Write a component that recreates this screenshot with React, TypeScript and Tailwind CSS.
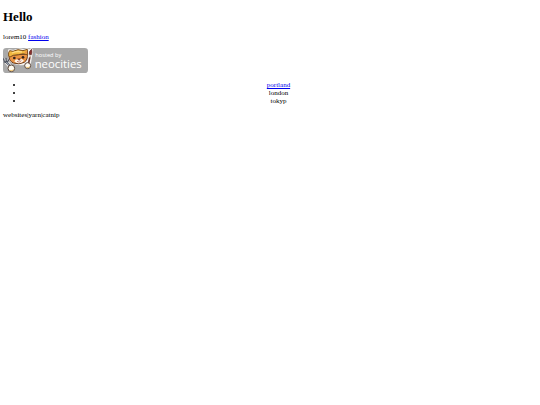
import type { ReactNode } from 'react'

const places: { name: string; href?: string }[] = [
  { name: 'portland', href: '#portland' },
  { name: 'london' },
  { name: 'tokyp' },
]

function TextLink({ href, children }: { href: string; children: ReactNode }) {
  return (
    <a href={href} className="text-[#0000ee] underline">
      {children}
    </a>
  )
}

function NeocitiesBadge() {
  return (
    <svg viewBox="0 0 255 75" className="block w-[85px] h-[25px]" role="img" aria-label="Hosted by Neocities">
      <rect width="255" height="75" rx="10" fill="#a9a9a9" />

      {/* white sticker outline */}
      <g fill="none" stroke="#f4f1ee" strokeWidth="8" strokeLinejoin="round" strokeLinecap="round">
        <path d="M20 24 L19 8 L32 10 Q50 2 62 8 L74 5 L76 24 Q80 40 62 47 Q34 50 22 36 Z" />
        <path d="M84 7 L76 52" strokeWidth="13" />
        <path d="M6 37 L26 60" strokeWidth="12" />
      </g>

      {/* fork */}
      <g fill="none" stroke="#4b505c" strokeLinecap="round">
        <path d="M10 42 L25 58" strokeWidth="6" />
        <path d="M2 33 L4 42 L12 44 L17 36 M9 31 L10 42" strokeWidth="4" />
      </g>
      <path d="M10 42 L24 57" stroke="#aeb8c6" strokeWidth="3" />

      {/* face */}
      <path d="M19 22 Q16 38 31 45 Q48 51 64 43 Q75 35 73 18 Z" fill="#ec9443" stroke="#6b3c20" strokeWidth="3" />
      <path d="M34 40 Q38 32 46 34 Q55 29 63 38 Q58 45 48 46 Q38 46 34 40" fill="#fff5e7" />
      <path d="M44 33 L52 32 L49 37 Z" fill="#a83f35" stroke="#61301f" strokeWidth="2" />
      <path d="M42 40 Q49 46 55 38" fill="none" stroke="#a83f35" strokeWidth="2" />
      <ellipse cx="34" cy="30" rx="4" ry="4" fill="#34231e" />
      <ellipse cx="60" cy="28" rx="4" ry="4" fill="#34231e" />

      {/* helmet */}
      <path
        d="M17 25 Q15 13 20 8 L30 10 Q45 1 60 8 L73 4 L74 20 Q61 15 46 20 Q29 20 21 27 Z"
        fill="#f3b840"
        stroke="#80501d"
        strokeWidth="3"
        strokeLinejoin="round"
      />
      <path d="M27 15 Q41 8 57 12" fill="none" stroke="#ffdc82" strokeWidth="4" />
      <path d="M65 13 L71 8 L71 18 Z" fill="#ed8a4b" />

      {/* brush */}
      <path d="M81 25 L76 49" stroke="#6a332a" strokeWidth="5" strokeLinecap="round" />
      <path d="M82 19 L80 28" stroke="#e5d8c4" strokeWidth="5" />
      <path d="M86 4 Q77 10 79 19 L85 20 Q88 13 86 4" fill="#8a2f2b" stroke="#5a2525" strokeWidth="2" />

      {/* paws */}
      <g fill="#fffaf0" stroke="#5d4a3d" strokeWidth="3">
        <circle cx="25" cy="61" r="10" />
        <circle cx="74" cy="53" r="9" />
      </g>
      <path d="M21 67 Q27 70 32 65 M70 58 Q76 61 80 56" fill="none" stroke="#edc16e" strokeWidth="3" />

      <g fill="#ffffff" className="font-['Open_Sans',sans-serif]">
        <text x="97" y="27" fontSize="17">
          hosted by
        </text>
        <text x="95" y="59" fontSize="34">
          neocities
        </text>
      </g>
    </svg>
  )
}

export default function App() {
  return (
    <main className="flex flex-col bg-white px-[3px] py-2.5 font-['Liberation_Serif',serif] text-[7px] leading-[8px] text-black">
      <h1 className="text-[13px] leading-[14px] font-bold">Hello</h1>

      <p className="mt-[9px]">
        lorem10 <TextLink href="#fashion">fashion</TextLink>
      </p>

      <a href="#neocities" className="mt-[7px] self-start">
        <NeocitiesBadge />
      </a>

      <ul className="mt-2 list-disc pr-1 pl-[21px] marker:text-[8px]">
        {places.map((place) => (
          <li key={place.name}>
            <div className="text-center">
              {place.href ? <TextLink href={place.href}>{place.name}</TextLink> : place.name}
            </div>
          </li>
        ))}
      </ul>

      <p className="mt-1.5">websites|yarn|catnip</p>
    </main>
  )
}
